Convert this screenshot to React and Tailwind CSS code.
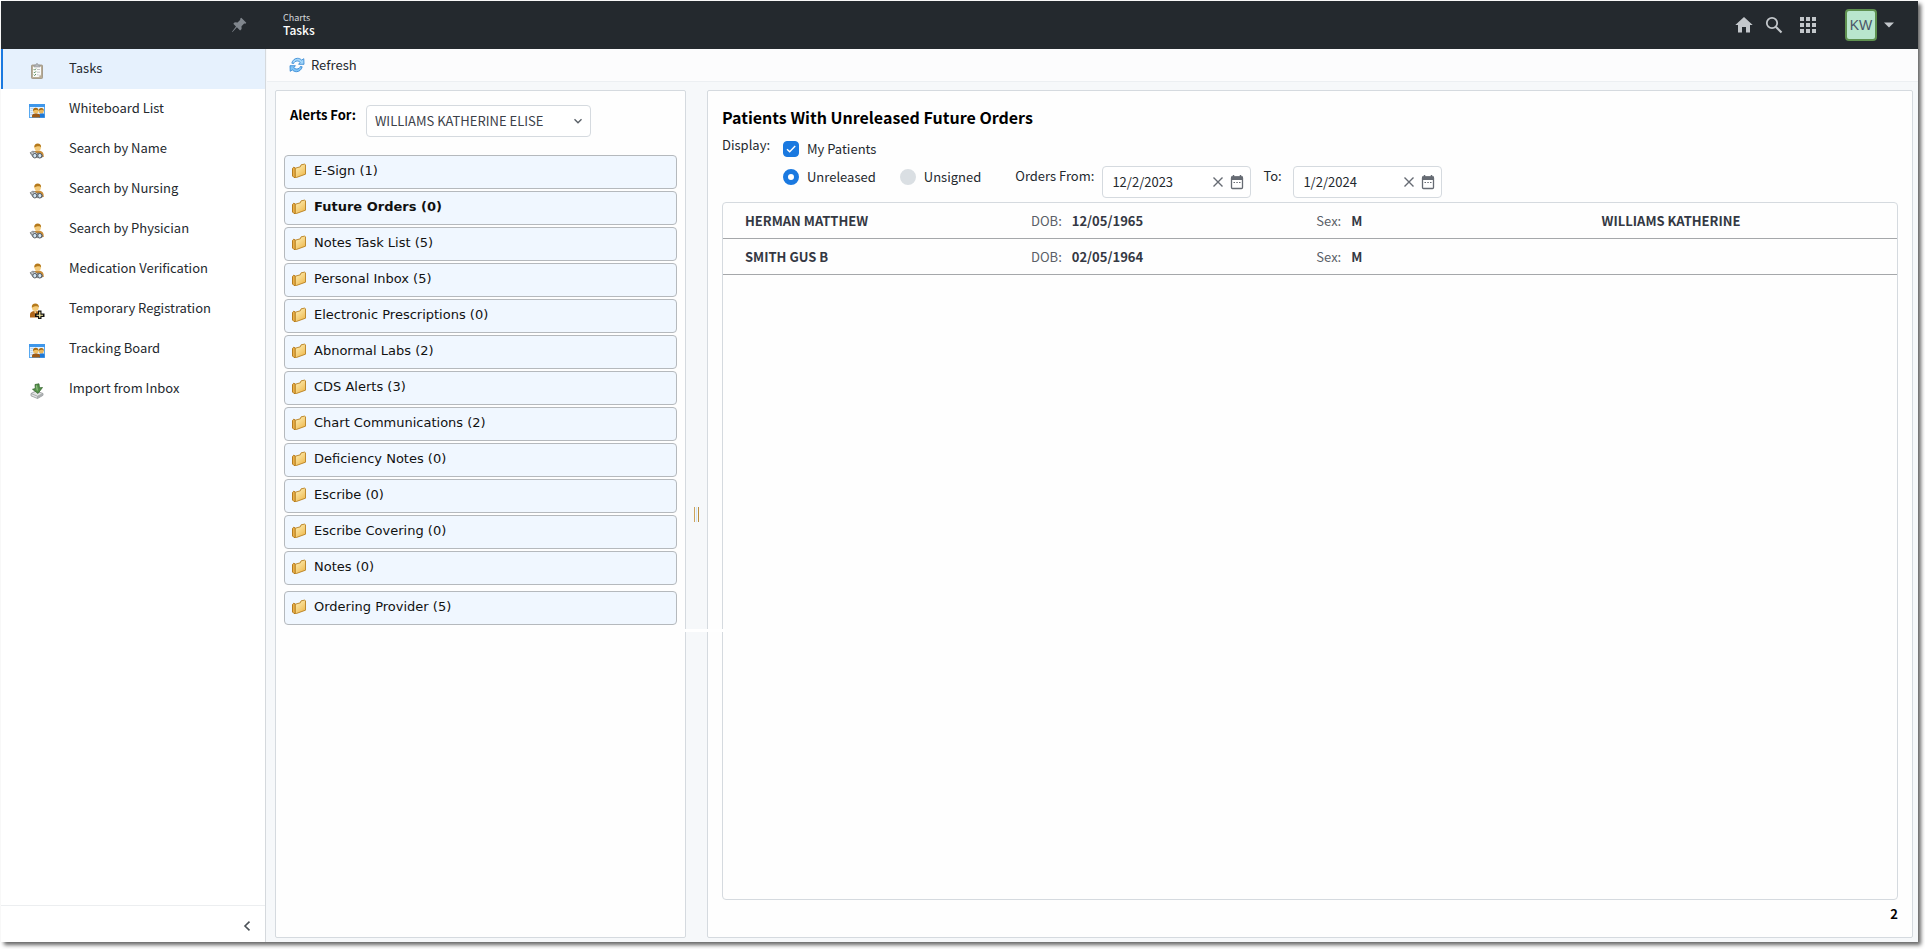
import { useState } from "react";

const SANS = "font-['Noto_Sans_CJK_JP','Noto_Sans',sans-serif]";

function ClipboardIcon() {
  return (
    <svg width="16" height="16" viewBox="0 0 16 16" aria-hidden="true">
      <rect x="2.500" y="2" width="11" height="13.500" rx="0.800" fill="#b9ad96" stroke="#9b917d" strokeWidth="0.800" />
      <path d="M4 3.500h8v8.300L9.800 14H4z" fill="#fbfbfa" />
      <path d="M12 11.800L9.800 14v-2.200z" fill="#d2d2cf" />
      <path d="M5 4V2.200h1.700L7.500.6h1l.8 1.600H11V4z" fill="#b6b9bd" stroke="#85888d" strokeWidth="0.500" />
      <path d="M4.800 6.300l.8.800L7 5.600M4.800 9l.8.800L7 8.300M4.800 11.700l.8.800L7 11" fill="none" stroke="#3f7d4a" strokeWidth="0.900" />
      <path d="M8 6.500h3M8 9.200h3M8 11.800h1.500" stroke="#b4b6b8" strokeWidth="0.800" />
    </svg>
  );
}

function BoardIcon() {
  return (
    <svg width="16" height="16" viewBox="0 0 16 16" aria-hidden="true">
      <rect x="0.500" y="1.500" width="15" height="13" fill="#e4f1fd" stroke="#58a9f0" />
      <rect x="0" y="1" width="16" height="3" fill="#3f97ea" />
      <path d="M1.500 5.500h3M1.500 7.500h2M1.500 9.500h2M1.500 11.500h2" stroke="#a3cdf3" strokeWidth="0.800" />
      <path d="M10 14.500v-2.600c0-1 1-1.600 2.500-1.600s3 .4 3 1.600v2.600z" fill="#1f78d6" />
      <circle cx="12.200" cy="8" r="2.500" fill="#e9b65c" />
      <path d="M9.700 8c-.2-2 1-3 2.600-3s2.700 1 2.500 3c-.8-1.200-2.500-1.800-5.100 0z" fill="#a8690f" />
      <circle cx="6.800" cy="8" r="2.700" fill="#f0c063" />
      <path d="M4 8c-.2-2.200 1.100-3.200 2.800-3.200S9.600 5.800 9.500 8C8.600 6.700 6.800 6.300 4 8z" fill="#a8690f" />
      <path d="M3 14.500v-1.700C3 11.300 4.500 10.600 7 10.600s4 .7 4 2.200v1.700z" fill="#9c5a16" />
    </svg>
  );
}

function PersonSearchIcon() {
  return (
    <svg width="16" height="16" viewBox="0 0 16 16" aria-hidden="true">
      <path d="M4.500 9.500C5 8 6.500 7.500 9 7.500c3 0 5 1.300 5.500 3.500l.3 3H10z" fill="#c98d3a" />
      <circle cx="8.700" cy="4.500" r="3.200" fill="#f3ca78" />
      <path d="M5.300 4.500C5 1.800 6.600.6 8.700.6s3.700 1.200 3.400 3.900C11 2.700 8.500 2.700 5.300 4.500z" fill="#b5791b" />
      <path d="M1 9.800l2.500-1.500 2 .2 2.500 2 2-.5 3.500 2.200-.5 2.300-3 .3-6-.8z" fill="#9da3a9" stroke="#5c6268" strokeWidth="0.600" />
      <path d="M2.500 9.500l3 2M5 9l3 2" stroke="#e4e8eb" strokeWidth="0.800" />
      <ellipse cx="5.800" cy="12.700" rx="2" ry="2.300" fill="#cfe3f2" stroke="#4d5258" strokeWidth="0.900" />
      <ellipse cx="10.800" cy="12.700" rx="2" ry="2.300" fill="#cfe3f2" stroke="#4d5258" strokeWidth="0.900" />
    </svg>
  );
}

function PersonAddIcon() {
  return (
    <svg width="16" height="16" viewBox="0 0 16 16" aria-hidden="true">
      <path d="M1 14.500V12C1 9 3 8 6.300 8s5.200 1 5.200 4v2.500z" fill="#b0661a" />
      <path d="M5 8.300l1.300 2.700L7.600 8.300z" fill="#f6dca6" />
      <circle cx="6.300" cy="4.700" r="3.300" fill="#f3ca78" />
      <path d="M2.800 4.700C2.500 1.800 4.200.6 6.300.6s3.900 1.200 3.600 4.100C8.800 2.900 6.200 2.900 2.800 4.700z" fill="#b5791b" />
      <path d="M9 7.500h3.500v3H15.500V14h-3v2H9v-2H6v-3.500h3z" fill="#111" />
      <path d="M10.750 8.800v6M7.500 12.250h6.500" stroke="#fff2a8" strokeWidth="1.200" />
    </svg>
  );
}

function ImportIcon() {
  return (
    <svg width="16" height="16" viewBox="0 0 16 16" aria-hidden="true">
      <path d="M2 10.500l5-2.500 7 2.500v1.800L8.500 15.500 2 12.800z" fill="#e3e4e4" stroke="#8f9396" strokeWidth="0.800" />
      <path d="M2 10.500l6.500 2.700L14 10.500M8.500 13.200v2.300" fill="none" stroke="#9a9ea1" strokeWidth="0.800" />
      <path d="M14 10.500v1.800L8.500 15.500v-2.300z" fill="#a9adaf" />
      <path d="M6 1.500l4-.7.500 4 3-.3L9 10.500 3.500 6.300 6.300 5.500z" fill="#55924a" stroke="#2f5f28" strokeWidth="0.700" />
      <path d="M7.500 2.500l.8 5" stroke="#9cc98e" />
    </svg>
  );
}

function FolderIcon() {
  return (
    <svg width="16" height="16" viewBox="0 0 16 16" aria-hidden="true">
      <defs>
        <linearGradient id="folderFace" x1="0" y1="0" x2="0.700" y2="1">
          <stop offset="0" stopColor="#fff3bd" />
          <stop offset="1" stopColor="#efbb52" />
        </linearGradient>
      </defs>
      <path d="M1.500 5.500l1.200-1.300L4.300 5v9.500H3L1.500 13z" fill="#e9b04a" stroke="#b0720f" strokeWidth="0.900" />
      <path d="M4.300 5.200l5-1.400.7-1.900 3.600-.8.900.7v9.400L5.300 14.500H4.300z" fill="url(#folderFace)" stroke="#b9801f" strokeWidth="0.900" />
    </svg>
  );
}

function RefreshIcon() {
  return (
    <svg width="16" height="16" viewBox="0 0 16 16" aria-hidden="true">
      <path
        d="M2.800 6.200C3.500 3.300 5.700 1.300 8.500 1.300c1.700 0 3.100.7 4.200 1.800L14.800 1.700 15 7.300H9.600l1.600-1.900C10.400 4.500 9.500 4 8.300 4 6.500 4 5.200 5 4.700 6.500z"
        fill="#a4d6f9"
        stroke="#2b82d0"
        strokeWidth="0.800"
      />
      <path
        d="M13.200 9.800c-.7 2.900-2.900 4.900-5.700 4.900-1.700 0-3.100-.7-4.200-1.800L1.200 14.300 1 8.700h5.400l-1.600 1.900c.8.900 1.700 1.400 2.900 1.400 1.800 0 3.100-1 3.600-2.500z"
        fill="#7fc3f6"
        stroke="#2b82d0"
        strokeWidth="0.800"
      />
    </svg>
  );
}

function CalendarIcon() {
  return (
    <svg width="14" height="16" viewBox="0 0 14 16" aria-hidden="true">
      <rect x="1.500" y="3" width="11" height="11.500" rx="1" fill="none" stroke="#666b73" strokeWidth="1.300" />
      <path d="M1 2.500h12v3.500H1z" fill="#666b73" />
      <path d="M3.500 1v3M10.500 1v3" stroke="#666b73" strokeWidth="1.500" />
      <path d="M3.500 8.500H5M6.300 8.500h1.500M9 8.500h1.500" stroke="#666b73" />
    </svg>
  );
}

const NAV = [
  { label: "Tasks", Icon: ClipboardIcon },
  { label: "Whiteboard List", Icon: BoardIcon },
  { label: "Search by Name", Icon: PersonSearchIcon },
  { label: "Search by Nursing", Icon: PersonSearchIcon },
  { label: "Search by Physician", Icon: PersonSearchIcon },
  { label: "Medication Verification", Icon: PersonSearchIcon },
  { label: "Temporary Registration", Icon: PersonAddIcon },
  { label: "Tracking Board", Icon: BoardIcon },
  { label: "Import from Inbox", Icon: ImportIcon },
];

const ALERTS = [
  ["E-Sign", 1],
  ["Future Orders", 0],
  ["Notes Task List", 5],
  ["Personal Inbox", 5],
  ["Electronic Prescriptions", 0],
  ["Abnormal Labs", 2],
  ["CDS Alerts", 3],
  ["Chart Communications", 2],
  ["Deficiency Notes", 0],
  ["Escribe", 0],
  ["Escribe Covering", 0],
  ["Notes", 0],
];

const PATIENTS = [
  { name: "HERMAN MATTHEW", dob: "12/05/1965", sex: "M", provider: "WILLIAMS KATHERINE" },
  { name: "SMITH GUS B", dob: "02/05/1964", sex: "M", provider: "" },
];

function Header() {
  return (
    <header className="flex h-12 shrink-0 items-center bg-[#24292e] text-[#c3c7cb]">
      <div className="flex w-[266px] justify-end pr-5">
        <button aria-label="Pin menu" className="text-[#80868d]">
          <svg width="16" height="16" viewBox="0 0 16 16" fill="currentColor" aria-hidden="true">
            <path d="M10.300.800l5 5-.9 1-1.200-.2-2.700 2.700.1 2.700-1.500 1.500-3.200-3.200L1.800 14.700.9 15.300l.5-1L5 9.400 2.300 6.800l1.500-1.500 2.800.2 2.700-2.700-.2-1.100z" />
          </svg>
        </button>
      </div>
      <div className="flex-1 pb-0.5 pl-4">
        <p className="text-[9px] leading-3 text-[#d5d8db]">Charts</p>
        <h1 className="text-[12px] leading-3 font-medium text-white">Tasks</h1>
      </div>
      <div className="flex items-center pr-6">
        <button aria-label="Home">
          <svg width="18" height="18" viewBox="0 0 18 18" fill="currentColor" aria-hidden="true">
            <path d="M9 1l8.700 8H15v7.500h-4V11H7v5.500H3V9H.3z" />
          </svg>
        </button>
        <button aria-label="Search" className="ml-3">
          <svg width="18" height="18" viewBox="0 0 18 18" fill="none" stroke="currentColor" aria-hidden="true">
            <circle cx="7" cy="7" r="5.200" strokeWidth="1.800" />
            <path d="M10.800 10.800l5.700 5.700" strokeWidth="2.200" />
          </svg>
        </button>
        <button aria-label="Applications" className="ml-4">
          <svg width="18" height="18" viewBox="0 0 18 18" fill="currentColor" aria-hidden="true">
            <path d="M1 1h4v4H1zM7 1h4v4H7zM13 1h4v4h-4zM1 7h4v4H1zM7 7h4v4H7zM13 7h4v4h-4zM1 13h4v4H1zM7 13h4v4H7zM13 13h4v4h-4z" />
          </svg>
        </button>
        <button className="ml-7 flex items-center gap-[7px]">
          <span className="flex size-8 items-center justify-center rounded border-2 border-[#5f9150] bg-[#b9e6cd] font-['Liberation_Sans',sans-serif] text-[14px] text-[#4a5568]">
            KW
          </span>
          <svg width="10" height="6" viewBox="0 0 10 6" fill="currentColor" aria-hidden="true">
            <path d="M0 .5h10L5 5.500z" />
          </svg>
        </button>
      </div>
    </header>
  );
}

function Sidebar() {
  return (
    <nav className="flex w-[265px] shrink-0 flex-col border-r border-[#d5d9dd] bg-white">
      <ul className="flex-1">
        {NAV.map(({ label, Icon }, i) => (
          <li key={label}>
            <a
              href="#"
              className={
                i === 0
                  ? "flex h-10 items-center border-l-2 border-[#1a79e0] bg-[#e6f1fd] pl-[26px]"
                  : "flex h-10 items-center border-l-2 border-transparent pl-[26px]"
              }
            >
              <span className="pt-1">
                <Icon />
              </span>
              <span className="pb-0.5 pl-6 text-[13px] leading-5 text-[#24292e]">{label}</span>
            </a>
          </li>
        ))}
      </ul>
      <div className="flex h-[37px] items-center justify-end border-t border-[#eceef0] pt-1 pr-[14px]">
        <button aria-label="Collapse menu">
          <svg width="8" height="10" viewBox="0 0 8 10" fill="none" stroke="#4b5157" strokeWidth="1.600" aria-hidden="true">
            <path d="M6.500.7L2 5l4.500 4.300" />
          </svg>
        </button>
      </div>
    </nav>
  );
}

function AlertRow({ label, count, selected }) {
  return (
    <button className="flex h-[34px] w-full items-center gap-[7px] rounded border border-[#b5b9bd] bg-[#f0f7ff] px-1.5 pb-0.5 text-left font-['DejaVu_Sans',sans-serif] text-[13px] text-[#111]">
      <FolderIcon />
      <span className={selected ? "font-bold" : ""}>
        {label} ({count})
      </span>
    </button>
  );
}

function AlertsPanel() {
  return (
    <section className="w-[411px] shrink-0 rounded-xs border border-[#d5dadf] bg-[#fefefe] px-2 pt-[14px]">
      <div className="flex items-start gap-2.5 pl-1.5">
        <label htmlFor="alertsFor" className="text-[13px] leading-5 font-bold text-black">
          Alerts For:
        </label>
        <div className="relative">
          <select
            id="alertsFor"
            className="h-8 w-[225px] appearance-none rounded border border-[#d5dadf] bg-white px-2 text-[13px] text-[#3c4149]"
          >
            <option>WILLIAMS KATHERINE ELISE</option>
          </select>
          <svg
            className="pointer-events-none absolute top-3 right-2"
            width="10"
            height="8"
            viewBox="0 0 10 8"
            fill="none"
            stroke="#5a6068"
            strokeWidth="1.400"
            aria-hidden="true"
          >
            <path d="M1.500 2.200L5 5.700l3.500-3.500" />
          </svg>
        </div>
      </div>
      <div className="mt-[18px] flex flex-col gap-0.5">
        {ALERTS.map(([label, count], i) => (
          <AlertRow key={label} label={label} count={count} selected={i === 1} />
        ))}
      </div>
      <div className="mt-1.5">
        <AlertRow label="Ordering Provider" count={5} />
      </div>
    </section>
  );
}

function Splitter() {
  return (
    <div className="relative flex w-[21px] shrink-0 items-center justify-center">
      <div className="flex h-[15px] gap-px">
        <span className="w-px bg-[#cda45c]" />
        <span className="w-px bg-[#d3e8f7]" />
        <span className="w-px bg-[#b98d3f]" />
      </div>
      <div className="absolute top-[539px] -left-px h-[3px] w-10 bg-white" />
    </div>
  );
}

function DateField({ id, label, initial }) {
  const [value, setValue] = useState(initial);
  return (
    <div className="flex items-start gap-2">
      <label htmlFor={id} className="min-w-[22px] text-[13px] leading-5">
        {label}
      </label>
      <div className="flex h-8 w-[149px] items-center rounded border border-[#d5dadf] bg-white pr-1.5 pl-[9px]">
        <input
          id={id}
          value={value}
          onChange={(e) => setValue(e.target.value)}
          className="w-0 min-w-0 flex-1 text-[13px] text-[#24292e] outline-none"
        />
        <button aria-label={`Clear ${label}`} onClick={() => setValue("")}>
          <svg width="12" height="12" viewBox="0 0 12 12" stroke="#666b73" strokeWidth="1.400" aria-hidden="true">
            <path d="M1.500 1.500l9 9M10.500 1.500l-9 9" />
          </svg>
        </button>
        <button aria-label={`Choose ${label}`} className="ml-1.5">
          <CalendarIcon />
        </button>
      </div>
    </div>
  );
}

function Radio({ id, label, defaultChecked }) {
  return (
    <div className="flex items-center gap-2">
      <input
        type="radio"
        name="release"
        id={id}
        defaultChecked={defaultChecked}
        className="size-4 appearance-none rounded-full border-[5px] border-[#dadfe3] bg-[#dadfe3] checked:border-[#1a79e0] checked:bg-white"
      />
      <label htmlFor={id} className="text-[13px] leading-5">
        {label}
      </label>
    </div>
  );
}

function OrdersPanel() {
  return (
    <section className="flex min-w-0 flex-1 flex-col rounded-xs border border-[#d5dadf] bg-[#fefefe] px-[14px] pt-[14px] text-[#24292e]">
      <h2 className="text-base leading-6 font-bold text-black">Patients With Unreleased Future Orders</h2>
      <div className="flex h-[73px] items-start pt-1.5">
        <span className="w-[61px] text-[13px] leading-5">Display:</span>
        <div className="flex flex-col gap-2 pt-1">
          <div className="flex items-center gap-2">
            <span className="relative flex size-4">
              <input
                type="checkbox"
                id="myPatients"
                defaultChecked
                className="size-4 appearance-none rounded border border-[#d5dadf] checked:border-[#1a79e0] checked:bg-[#1a79e0]"
              />
              <svg
                className="pointer-events-none absolute inset-0"
                width="16"
                height="16"
                viewBox="0 0 16 16"
                fill="none"
                stroke="white"
                strokeWidth="1.400"
                aria-hidden="true"
              >
                <path d="M4 8.200l2.700 2.600L12.200 5" />
              </svg>
            </span>
            <label htmlFor="myPatients" className="text-[13px] leading-5">
              My Patients
            </label>
          </div>
          <div className="flex gap-6">
            <Radio id="unreleased" label="Unreleased" defaultChecked />
            <Radio id="unsigned" label="Unsigned" />
          </div>
        </div>
        <div className="flex gap-3 pt-[31px] pl-[34px]">
          <DateField id="ordersFrom" label="Orders From:" initial="12/2/2023" />
          <DateField id="ordersTo" label="To:" initial="1/2/2024" />
        </div>
      </div>
      <div className="flex-1 rounded-sm border border-[#d5dadf]">
        <table className="w-full table-fixed border-separate border-spacing-0 text-left text-[13px]">
          <tbody>
            {PATIENTS.map((p) => (
              <tr key={p.name} className="h-9 text-[#343843]">
                <td className="w-[308px] border-b border-[#a5a7aa] pl-[22px] font-bold">{p.name}</td>
                <td className="w-[24.3%] border-b border-[#a5a7aa]">
                  <span className="mr-2.5 text-[#5a5f68]">DOB:</span>
                  <span className="font-bold">{p.dob}</span>
                </td>
                <td className="w-[24.3%] border-b border-[#a5a7aa]">
                  <span className="mr-2.5 text-[#5a5f68]">Sex:</span>
                  <span className="font-bold">{p.sex}</span>
                </td>
                <td className="border-b border-[#a5a7aa] font-bold">{p.provider}</td>
              </tr>
            ))}
          </tbody>
        </table>
      </div>
      <p className="h-[37px] pt-1 text-right text-[13px] leading-5 font-bold text-black">2</p>
    </section>
  );
}

export default function App() {
  return (
    <div className={`h-screen overflow-hidden bg-white pt-px pr-[7px] pb-[7px] pl-px ${SANS}`}>
      <div className="flex h-full flex-col shadow-[3px_3px_4px_#666]">
        <Header />
        <div className="flex min-h-0 flex-1">
          <Sidebar />
          <div className="flex min-w-0 flex-1 flex-col border-l border-[#f6f8fa] bg-[#f6f8fa]">
            <div className="flex h-[33px] shrink-0 items-center border-b border-[#eceff2] bg-[#fcfcfd] pl-[22px]">
              <button className="flex items-center gap-1.5 text-[13px] text-[#24292e]">
                <RefreshIcon />
                Refresh
              </button>
            </div>
            <main className="flex min-h-0 flex-1 pt-2 pr-[5px] pb-1 pl-2">
              <AlertsPanel />
              <Splitter />
              <OrdersPanel />
            </main>
          </div>
        </div>
      </div>
    </div>
  );
}
